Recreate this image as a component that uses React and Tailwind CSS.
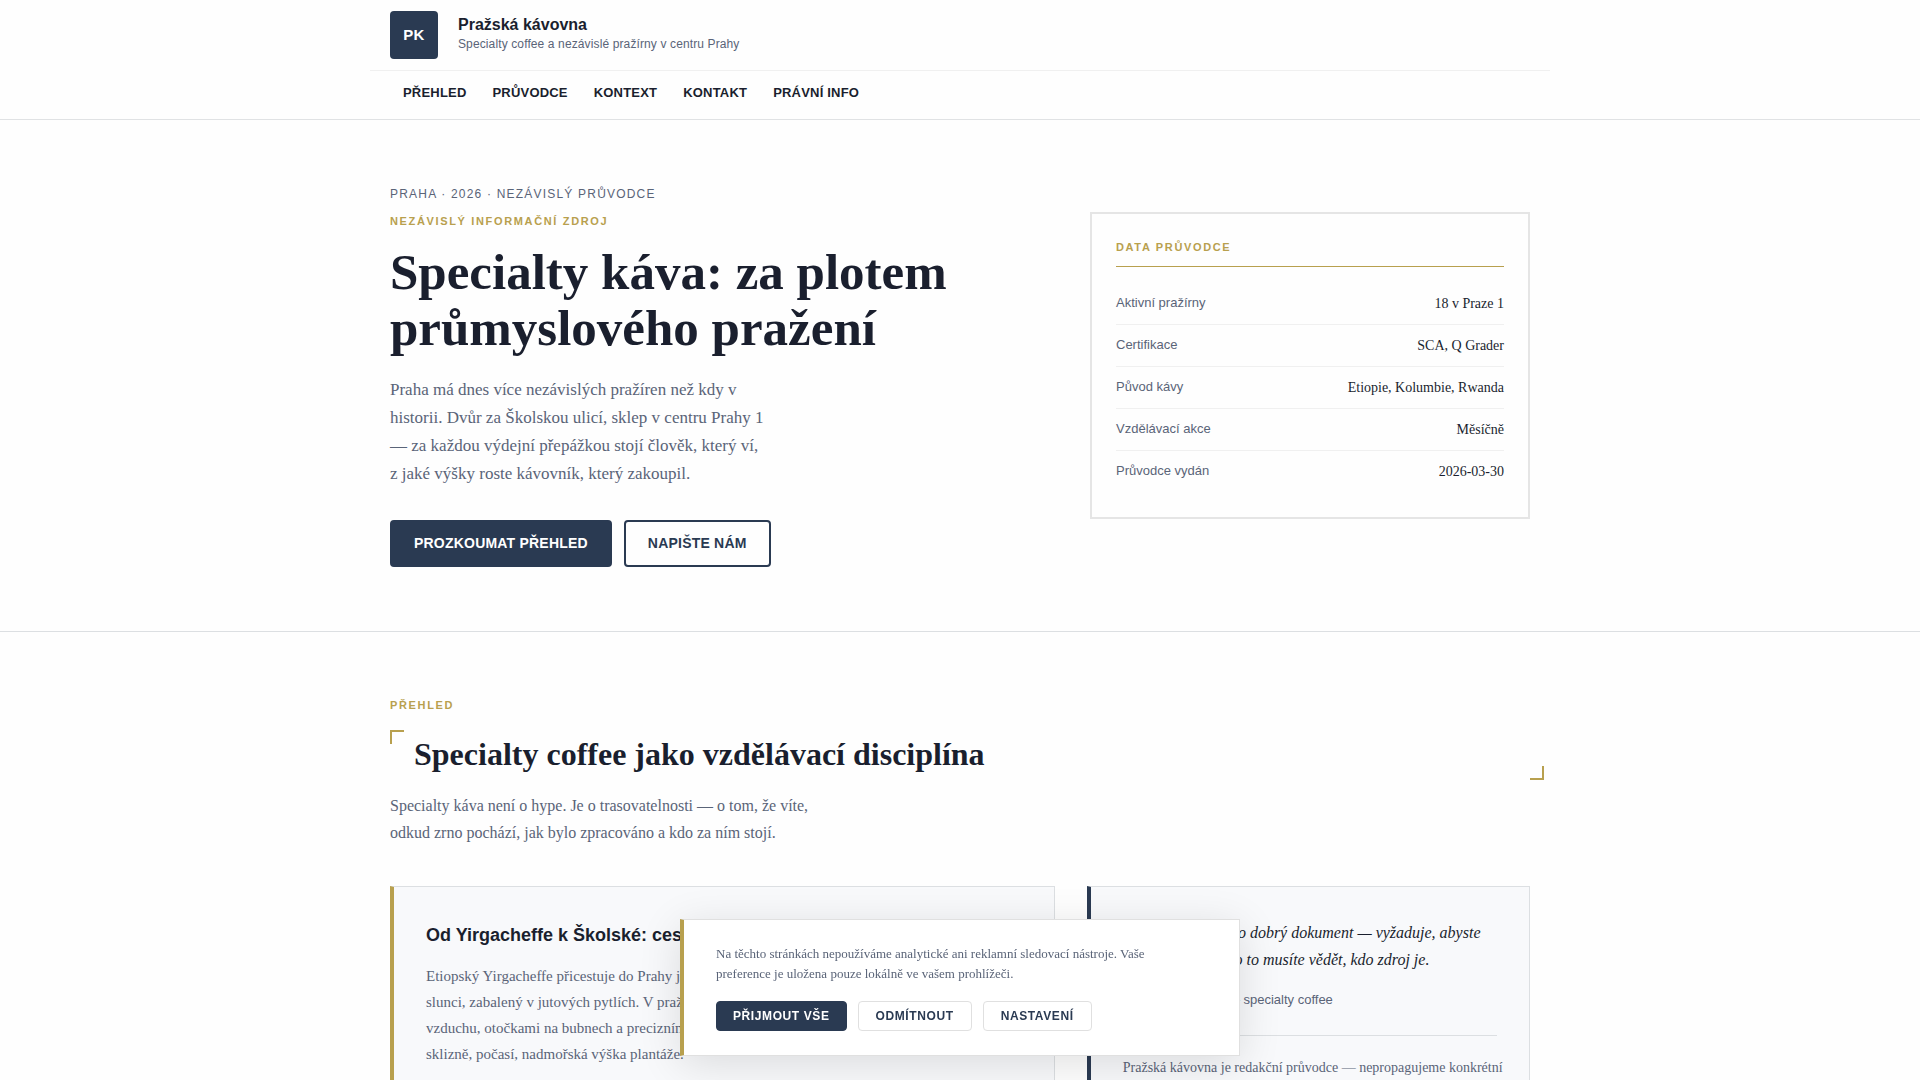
const NAV = [
  ["PŘEHLED", "#prehled"],
  ["PRŮVODCE", "#pruvodce"],
  ["KONTEXT", "#kontext"],
  ["KONTAKT", "#kontakt"],
  ["PRÁVNÍ INFO", "#pravni"],
];

const FACTS = [
  ["Aktivní pražírny", "18 v Praze 1"],
  ["Certifikace", "SCA, Q Grader"],
  ["Původ kávy", "Etiopie, Kolumbie, Rwanda"],
  ["Vzdělávací akce", "Měsíčně"],
  ["Průvodce vydán", "2026-03-30"],
];

const SANS = "font-['Liberation_Sans',Arial,sans-serif]";
const LABEL = `${SANS} text-[11px] leading-[18px] font-bold tracking-[0.15em] text-[#b8a04e]`;

function Header() {
  return (
    <header className={`${SANS} border-b border-[#e0e2e4]`}>
      <div className="mx-auto max-w-[1180px]">
        <div className="flex items-center gap-5 border-b border-[#f0f0f0] px-5 py-[11px]">
          <div className="flex size-12 items-center justify-center rounded bg-[#2a3a52] text-[15px] font-bold tracking-wide text-white">
            PK
          </div>
          <div className="pb-0.5">
            <div className="text-base leading-5 font-bold text-[#1a1f2e]">Pražská kávovna</div>
            <div className="text-xs leading-[18px] tracking-[0.01em] text-[#5a6478]">
              Specialty coffee a nezávislé pražírny v centru Prahy
            </div>
          </div>
        </div>
        <nav className="flex px-5 pt-1.5 pb-2.5">
          {NAV.map(([label, href]) => (
            <a
              key={href}
              href={href}
              className="px-[13px] py-1.5 text-[13px] leading-5 font-bold tracking-[0.015em] text-[#1a1f2e]"
            >
              {label}
            </a>
          ))}
        </nav>
      </div>
    </header>
  );
}

function Hero() {
  return (
    <section className="border-b border-[#dcdfe2]">
      <div className="mx-auto grid max-w-[1180px] grid-cols-[minmax(0,1fr)_440px] items-start gap-12 px-5 py-16">
        <div>
          <p className={`${SANS} text-xs leading-5 tracking-widest text-[#5a6478]`}>
            PRAHA · 2026 · NEZÁVISLÝ PRŮVODCE
          </p>
          <p className={`${LABEL} mt-2`}>NEZÁVISLÝ INFORMAČNÍ ZDROJ</p>
          <h1 className="mt-3.5 text-[51px] leading-14 font-bold text-[#1a1f2e]">
            Specialty káva: za plotem průmyslového pražení
          </h1>
          <p className="mt-5 max-w-[380px] text-[17px] leading-7 text-[#5a6478]">
            Praha má dnes více nezávislých pražíren než kdy v historii. Dvůr za Školskou ulicí, sklep v centru Prahy 1 —
            za každou výdejní přepážkou stojí člověk, který ví, z jaké výšky roste kávovník, který zakoupil.
          </p>
          <div className={`${SANS} mt-8 flex gap-3 text-sm leading-[19px] font-bold tracking-[0.015em]`}>
            <a href="#prehled" className="rounded border-2 border-[#2a3a52] bg-[#2a3a52] px-[22px] py-3 text-white">
              PROZKOUMAT PŘEHLED
            </a>
            <a href="#kontakt" className="rounded border-2 border-[#2a3a52] px-[22px] py-3 text-[#2a3a52]">
              NAPIŠTE NÁM
            </a>
          </div>
        </div>
        <aside className="mt-7 border-2 border-[#e5e5e5] p-6">
          <h2 className={`${LABEL} mb-4 border-b border-[#b8a04e] pb-2.5`}>DATA PRŮVODCE</h2>
          <dl>
            {FACTS.map(([term, value]) => (
              <div
                key={term}
                className="flex items-start justify-between border-b border-[#f0f0f0] py-2.5 last:border-transparent"
              >
                <dt className={`${SANS} text-[13px] leading-5 text-[#5a6478]`}>{term}</dt>
                <dd className="text-sm leading-[21px] text-[#1a1f2e]">{value}</dd>
              </div>
            ))}
          </dl>
        </aside>
      </div>
    </section>
  );
}

function Overview() {
  return (
    <section id="prehled" className="mx-auto max-w-[1180px] px-5 py-16">
      <p className={LABEL}>PŘEHLED</p>
      <div className="relative mt-4 pt-1 pb-1.5 pl-6">
        <span className="absolute top-0 left-0 size-3.5 border-t-2 border-l-2 border-[#b8a04e]" />
        <h2 className="text-[32px] leading-10 font-bold text-[#1a1f2e]">Specialty coffee jako vzdělávací disciplína</h2>
        <span className="absolute bottom-0 left-full size-3.5 border-r-2 border-b-2 border-[#b8a04e]" />
      </div>
      <p className="mt-3 max-w-[440px] text-base leading-[27px] text-[#5a6478]">
        Specialty káva není o hype. Je o trasovatelnosti — o tom, že víte, odkud zrno pochází, jak bylo zpracováno a kdo
        za ním stojí.
      </p>
      <div className="mt-10 grid grid-cols-[3fr_2fr] gap-8">
        <article className="border border-l-4 border-[#dcdfe2] border-l-[#b8a04e] bg-[#f8f9fb] p-8">
          <h3 className={`${SANS} text-lg leading-8 font-bold text-[#1a1f2e]`}>
            Od Yirgacheffe k Školské: cesta zrna
          </h3>
          <p className="mt-3 text-[15px] leading-[26px] text-[#5a6478]">
            Etiopský Yirgacheffe přicestuje do Prahy jako zelené zrno sušené na africkém
            <br />
            slunci, zabalený v jutových pytlích. V pražírně ho čeká proměna v horkém
            <br />
            vzduchu, otočkami na bubnech a precizním časem. Výsledek určuje rok
            <br />
            sklizně, počasí, nadmořská výška plantáže.
          </p>
        </article>
        <aside className="border border-l-4 border-[#dcdfe2] border-l-[#2a3a52] bg-[#f8f9fb] p-8">
          <blockquote className="text-base leading-[27px] text-[#1a1f2e] italic">
            Dobrá káva je jako dobrý dokument — vyžaduje, abyste
            <br />
            četli její zdroj. Pro to musíte vědět, kdo zdroj je.
          </blockquote>
          <p className={`${SANS} mt-4 text-[13px] leading-[22px] text-[#5a6478]`}>
            Redakční zásada — specialty coffee
          </p>
          <div className="mt-6 border-t border-[#dcdfe2] pt-5">
            <p className="-mr-3 text-sm leading-6 text-[#5a6478]">
              Pražská kávovna je redakční průvodce — nepropagujeme konkrétní značky ani provozovny.
            </p>
          </div>
        </aside>
      </div>
    </section>
  );
}

function CookieNotice() {
  return (
    <div
      role="dialog"
      aria-label="Nastavení soukromí"
      className="fixed bottom-6 left-1/2 w-[560px] max-w-full -translate-x-1/2 border border-l-4 border-[#e0e0e0] border-l-[#b8a04e] bg-white px-8 py-6 shadow-[0_8px_40px_rgba(0,0,0,0.12)]"
    >
      <p className="max-w-[450px] text-[13px] leading-5 text-[#5a6478]">
        Na těchto stránkách nepoužíváme analytické ani reklamní sledovací nástroje. Vaše preference je uložena pouze
        lokálně ve vašem prohlížeči.
      </p>
      <div className={`${SANS} mt-[17px] flex gap-[11px] text-xs leading-[18px] font-bold tracking-wider`}>
        <button type="button" className="rounded border border-[#2a3a52] bg-[#2a3a52] px-4 py-[5px] text-white">
          PŘIJMOUT VŠE
        </button>
        <button type="button" className="rounded border border-[#e0e0e0] px-[17px] py-[5px] text-[#2a3a52]">
          ODMÍTNOUT
        </button>
        <button type="button" className="rounded border border-[#e0e0e0] px-[17px] py-[5px] text-[#2a3a52]">
          NASTAVENÍ
        </button>
      </div>
    </div>
  );
}

export default function App() {
  return (
    <div className="min-h-screen bg-[#fefefe] font-['Liberation_Serif','Times_New_Roman',serif]">
      <Header />
      <main>
        <Hero />
        <Overview />
      </main>
      <CookieNotice />
    </div>
  );
}
